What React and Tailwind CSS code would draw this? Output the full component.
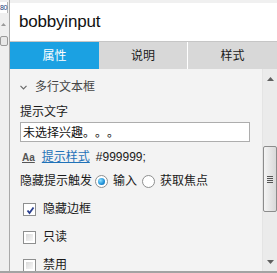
import React from "react";

const CJK = { fontFamily: '"Liberation Sans", "Noto Sans CJK SC", sans-serif' };

function Checkbox({ checked, label }) {
  return (
    <div className="flex items-center h-[16px] mt-[12px] first:mt-0">
      <div className="ml-[13px] w-[13px] h-[13px] border border-[#8e8f8f] bg-white p-[2px]">
        {checked ? (
          <svg width="9" height="9" viewBox="0 0 9 9">
            <path d="M1.5 4.5 L3.5 7 L7.5 1.5" stroke="#2a3f8f" strokeWidth="1.8" fill="none" />
          </svg>
        ) : (
          <div className="w-full h-full bg-gradient-to-br from-[#d9d9d9] to-[#f7f7f7]" />
        )}
      </div>
      <span className="ml-[7px] text-[12px] leading-[16px] text-[#1a1a1a]">{label}</span>
    </div>
  );
}

function Radio({ checked }) {
  return (
    <div className="w-[13px] h-[13px] rounded-full border border-[#8e8f8f] bg-white flex items-center justify-center">
      {checked && (
        <div className="w-[7px] h-[7px] rounded-full bg-[radial-gradient(circle_at_35%_35%,#8fe0ff,#1d8fd6_60%,#145c9e)]" />
      )}
    </div>
  );
}

export default function App() {
  return (
    <div className="w-[277px] h-[273px] flex flex-col bg-[#f0f0f0] overflow-hidden" style={CJK}>
      <div className="flex flex-1 min-h-0">
        {/* left strip */}
        <div className="w-[10px] flex flex-col border-r border-[#a9a9a9] bg-[#efefef]">
          <div className="mt-[2px] h-[11px] w-[8px] bg-white border-r border-[#b5b5b5] text-[7px] leading-[11px] text-[#1b3a7a] whitespace-nowrap tracking-[-0.5px]">
            80
          </div>
          <svg className="mt-[10px] ml-[1px]" width="5" height="3" viewBox="0 0 5 3">
            <path d="M0 3 L2.5 0 L5 3 Z" fill="#9a9a9a" />
          </svg>
          <div className="mt-[10px] w-[8px] h-[10px] border border-[#9a9a9a] rounded-[2px] bg-[#e8e8e8]" />
        </div>
        {/* main */}
        <div className="flex-1 flex flex-col min-w-0 pt-[3px]">
          <div className="h-[39px] bg-white border-b border-[#c6c6c6] flex items-center pl-[9px]">
            <span className="text-[17px] text-[#111] tracking-[-0.2px]" style={{ fontFamily: '"Liberation Sans", sans-serif' }}>
              bobbyinput
            </span>
          </div>
          <div className="h-[27px] flex bg-[#d8d8d8] text-[12px]">
            <div className="w-[89px] bg-[#1ba1e2] text-white flex items-center justify-center">属性</div>
            <div className="w-[89px] flex items-center justify-center text-[#1a1a1a] border-r border-white">说明</div>
            <div className="flex-1 flex items-center justify-center text-[#1a1a1a]">样式</div>
          </div>
          <div className="flex-1 flex min-h-0 bg-[#f3f3f3]">
            <div className="flex-1 min-w-0 flex flex-col pl-[10px]">
              {/* section header */}
              <div className="mt-[9px] h-[18px] flex items-center">
                <svg width="7" height="5" viewBox="0 0 7 5">
                  <path d="M0.5 0.8 L3.5 3.8 L6.5 0.8" stroke="#6a6a6a" strokeWidth="1.2" fill="none" />
                </svg>
                <span className="ml-[8px] text-[12px] text-[#444]">多行文本框</span>
              </div>
              <div className="mt-[8px] h-[16px] text-[12px] leading-[16px] text-[#1a1a1a]">提示文字</div>
              <div
                className="mt-[2px] w-[230px] h-[21px] bg-white border border-[#adadad] flex items-center pl-[2px] text-[12px] text-[#111] [text-spacing-trim:space-all]"
                style={{ fontFamily: '"Noto Sans CJK SC", sans-serif' }}
              >
                未选择兴趣。。。
              </div>
              <div className="mt-[7px] h-[16px] flex items-center text-[12px]">
                <span className="ml-[2px] text-[10px] font-bold text-[#555] underline" style={{ fontFamily: '"Liberation Sans", sans-serif' }}>
                  Aa
                </span>
                <span className="ml-[7px] text-[#1f72b8] underline">提示样式</span>
                <span className="ml-[6px] text-[#1a1a1a]">#999999;</span>
              </div>
              <div className="mt-[8px] h-[16px] flex items-center text-[12px] text-[#1a1a1a]">
                <span>隐藏提示触发</span>
                <span className="ml-[3px]"><Radio checked /></span>
                <span className="ml-[5px]">输入</span>
                <span className="ml-[5px]"><Radio /></span>
                <span className="ml-[5px]">获取焦点</span>
              </div>
              <div className="mt-[12px] flex flex-col -ml-[10px]">
                <Checkbox checked label="隐藏边框" />
                <Checkbox label="只读" />
                <Checkbox label="禁用" />
              </div>
            </div>
            {/* scrollbar */}
            <div className="w-[15px] flex flex-col items-center bg-[#ebebeb] border-l border-[#e4e4e4]">
              <svg className="mt-[8px]" width="7" height="4" viewBox="0 0 7 4">
                <path d="M0 4 L3.5 0 L7 4 Z" fill="#606060" />
              </svg>
              <div className="mt-[65px] w-[14px] h-[66px] rounded-[2px] border border-[#8c8c8c] bg-gradient-to-r from-[#f4f4f4] to-[#d9d9d9] flex flex-col items-center justify-center gap-[1px]">
                <div className="w-[6px] h-[1px] bg-[#555]" />
                <div className="w-[6px] h-[1px] bg-[#555]" />
                <div className="w-[6px] h-[1px] bg-[#555]" />
                <div className="w-[6px] h-[1px] bg-[#555]" />
              </div>
              <div className="flex-1" />
              <svg className="mb-[7px]" width="7" height="4" viewBox="0 0 7 4">
                <path d="M0 0 L3.5 4 L7 0 Z" fill="#606060" />
              </svg>
            </div>
          </div>
        </div>
      </div>
      <div className="h-[2px] bg-[#a3a3a3]" />
    </div>
  );
}
